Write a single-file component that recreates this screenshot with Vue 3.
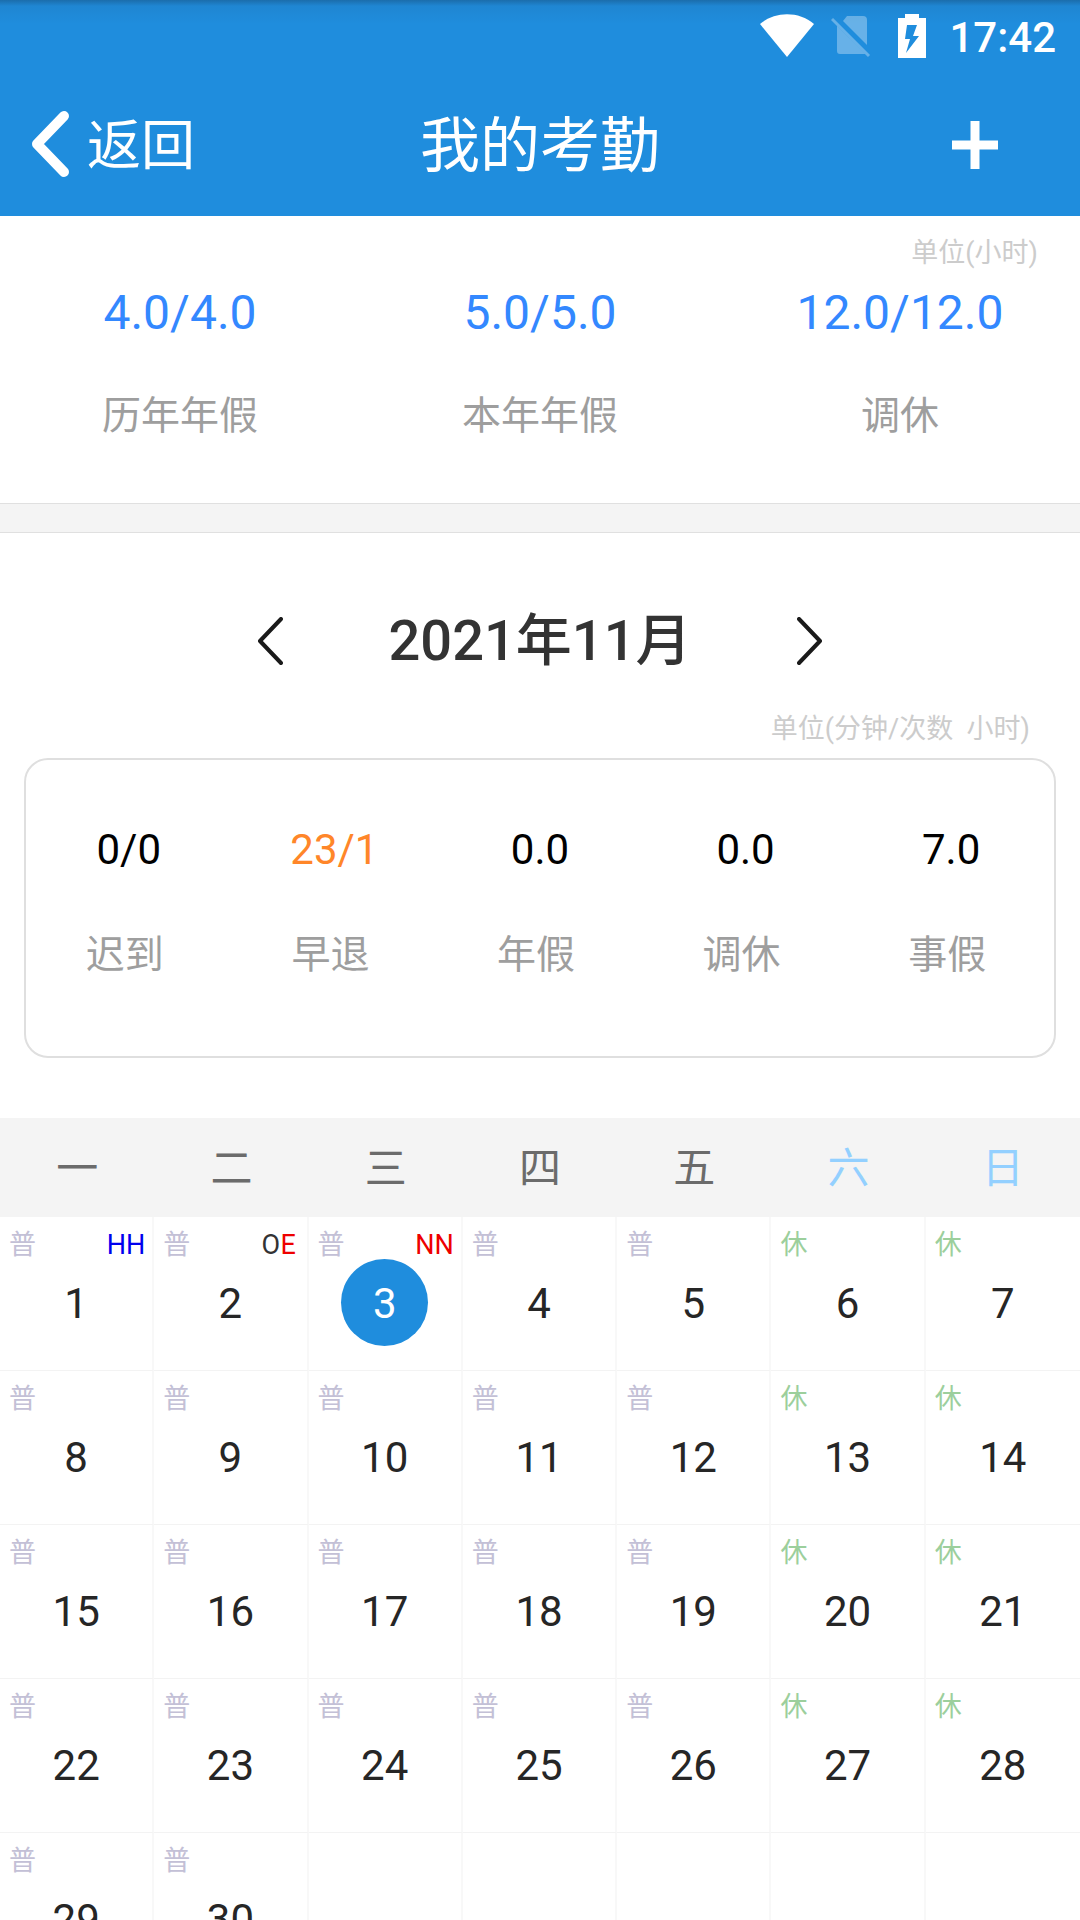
<template>
  <div class="page">
    <header class="header">
      <div class="status-bar">
        <svg class="icon-wifi" viewBox="0 0 54 44" aria-hidden="true">
          <path d="M0 10C15-3 39-3 54 10L27 43Z" fill="#fff" />
        </svg>
        <svg class="icon-sim" viewBox="0 0 40 44" aria-hidden="true">
          <path
            d="M16 2H32Q36 2 36 6V31L12 7ZM6 12L34 40H9Q6 40 6 37Z"
            fill="#fff"
            fill-opacity="0.32"
          />
          <path d="M1 5L38 42" stroke="#fff" stroke-opacity="0.32" stroke-width="3" />
        </svg>
        <svg class="icon-battery" viewBox="0 0 28 44" aria-hidden="true">
          <path
            d="M7 0H21V4H28V44H0V4H7ZM9 11L7 25H12L8 39L21 22H15L19 11Z"
            fill="#fff"
            fill-rule="evenodd"
          />
        </svg>
        <span class="time">17:42</span>
      </div>
      <nav class="nav">
        <button type="button" class="back">
          <svg class="icon-back" viewBox="0 0 38 66" aria-hidden="true">
            <path
              d="M33 5L6 33L33 61"
              fill="none"
              stroke="#fff"
              stroke-width="10"
              stroke-linecap="round"
              stroke-linejoin="round"
            />
          </svg>
          <span class="back-text">返回</span>
        </button>
        <h1 class="title">我的考勤</h1>
        <button type="button" class="add" aria-label="添加">
          <svg class="icon-add" viewBox="0 0 46 48" aria-hidden="true">
            <path d="M23 0V48M0 24H46" stroke="#fff" stroke-width="9" />
          </svg>
        </button>
      </nav>
    </header>

    <section class="leave">
      <p class="unit">单位(小时)</p>
      <ul class="leave-list">
        <li v-for="item in leaves" :key="item.label" class="leave-item">
          <span class="leave-value">{{ item.value }}</span>
          <span class="label">{{ item.label }}</span>
        </li>
      </ul>
    </section>

    <div class="divider"></div>

    <section class="month">
      <div class="month-switch">
        <button type="button" class="arrow" aria-label="上个月" @click="changeMonth(-1)">
          <svg class="icon-arrow" viewBox="0 0 26 48" aria-hidden="true">
            <path d="M24 2L3 24L24 46" />
          </svg>
        </button>
        <h2 class="month-title">{{ year }}年{{ month }}月</h2>
        <button type="button" class="arrow" aria-label="下个月" @click="changeMonth(1)">
          <svg class="icon-arrow" viewBox="0 0 26 48" aria-hidden="true">
            <path d="M2 2L23 24L2 46" />
          </svg>
        </button>
      </div>
      <p class="unit unit-month">{{ monthUnit }}</p>
      <ul class="stats">
        <li v-for="item in stats" :key="item.label" class="stats-item">
          <span class="stats-value" :class="{ warn: item.warn }">{{ item.value }}</span>
          <span class="label stats-label">{{ item.label }}</span>
        </li>
      </ul>
    </section>

    <table class="calendar">
      <thead>
        <tr>
          <th
            v-for="(name, index) in weekNames"
            :key="name"
            scope="col"
            class="week"
            :class="{ weekend: index > 4 }"
          >
            {{ name }}
          </th>
        </tr>
      </thead>
      <tbody>
        <tr v-for="(week, row) in weeks" :key="row">
          <td v-for="(day, col) in week" :key="col" class="cell">
            <template v-if="day">
              <span class="tag" :class="{ rest: col > 4 }">{{ col > 4 ? '休' : '普' }}</span>
              <span v-if="marks[day]" class="marks">
                <span
                  v-for="(mark, i) in marks[day]"
                  :key="i"
                  class="mark"
                  :class="mark.type"
                >{{ mark.text }}</span>
              </span>
              <button
                type="button"
                class="day"
                :class="{ selected: day === selected }"
                @click="selected = day"
              >
                {{ day }}
              </button>
            </template>
          </td>
        </tr>
      </tbody>
    </table>
  </div>
</template>

<script setup>
import { ref, computed } from 'vue'

const year = ref(2021)
const month = ref(11)
const selected = ref(3)

const weekNames = ['一', '二', '三', '四', '五', '六', '日']
const monthUnit = '单位(分钟/次数  小时)'

// 假期余额
const leaves = [
  { label: '历年年假', value: '4.0/4.0' },
  { label: '本年年假', value: '5.0/5.0' },
  { label: '调休', value: '12.0/12.0' }
]

// 当月统计
const stats = [
  { label: '迟到', value: '0/0' },
  { label: '早退', value: '23/1', warn: true },
  { label: '年假', value: '0.0' },
  { label: '调休', value: '0.0' },
  { label: '事假', value: '7.0' }
]

// 每日考勤标记（上午、下午）
const marks = {
  1: [{ text: 'H', type: 'holiday' }, { text: 'H', type: 'holiday' }],
  2: [{ text: 'O', type: 'normal' }, { text: 'E', type: 'abnormal' }],
  3: [{ text: 'N', type: 'abnormal' }, { text: 'N', type: 'abnormal' }]
}

// 按周一开头排列，空位补 null
const weeks = computed(() => {
  const offset = (new Date(year.value, month.value - 1, 1).getDay() + 6) % 7
  const total = new Date(year.value, month.value, 0).getDate()
  const cells = Array(offset).fill(null)
  for (let day = 1; day <= total; day++) {
    cells.push(day)
  }
  while (cells.length % 7) {
    cells.push(null)
  }
  const rows = []
  for (let i = 0; i < cells.length; i += 7) {
    rows.push(cells.slice(i, i + 7))
  }
  return rows
})

const changeMonth = (step) => {
  const date = new Date(year.value, month.value - 1 + step, 1)
  year.value = date.getFullYear()
  month.value = date.getMonth() + 1
}
</script>

<style>
body {
  margin: 0;
  background-color: #fff;
}
</style>

<style scoped>
.page {
  height: 100vh;
  overflow: hidden;
  background-color: #fff;
  color: #262626;
  font-family: Roboto, "Noto Sans CJK SC", sans-serif;
}
h1,
h2,
p,
ul {
  margin: 0;
  padding: 0;
}
ul {
  list-style: none;
}
button {
  padding: 0;
  border: 0;
  background: none;
  color: inherit;
  font-family: inherit;
  cursor: pointer;
}
svg {
  display: block;
}

/* 顶部 */
.header {
  background: linear-gradient(#1b6dab, #1f86d2 6px, #1f8ddd 24px);
  color: #fff;
}
.status-bar {
  display: flex;
  justify-content: flex-end;
  align-items: center;
  height: 72px;
  padding-right: 24px;
}
.icon-wifi {
  width: 54px;
  height: 44px;
  margin-right: 17px;
}
.icon-sim {
  width: 40px;
  height: 44px;
  margin-right: 27px;
}
.icon-battery {
  width: 28px;
  height: 44px;
  margin-right: 23px;
}
.time {
  padding-top: 4px;
  font-size: 42px;
  font-weight: 500;
  line-height: 68px;
}
.nav {
  display: grid;
  grid-template-columns: 1fr auto 1fr;
  align-items: center;
  height: 144px;
}
.back {
  display: flex;
  align-items: center;
  justify-self: start;
  gap: 18px;
  padding-left: 31px;
  font-size: 54px;
  line-height: 72px;
}
.back-text,
.title {
  padding-top: 6px;
}
.icon-back {
  width: 38px;
  height: 66px;
}
.title {
  font-size: 60px;
  font-weight: 400;
  line-height: 80px;
}
.add {
  justify-self: end;
  padding-top: 2px;
  padding-right: 82px;
}
.icon-add {
  width: 46px;
  height: 48px;
}

/* 假期余额 */
.leave {
  padding-top: 19px;
  padding-bottom: 63px;
}
.unit {
  padding-right: 42px;
  color: #ccc;
  font-size: 27px;
  line-height: 36px;
  text-align: right;
}
.leave-list {
  display: flex;
  margin-top: 14px;
}
.leave-item {
  display: flex;
  flex: 1;
  flex-direction: column;
  align-items: center;
  gap: 51px;
}
.leave-value {
  color: #3388ff;
  font-size: 48px;
  line-height: 56px;
}
.label {
  color: #9e9e9e;
  font-size: 39px;
  line-height: 48px;
}
.divider {
  height: 28px;
  border-top: 1px solid #e0e0e0;
  border-bottom: 1px solid #e0e0e0;
  background-color: #f4f4f4;
}

/* 月份与统计 */
.month {
  padding: 68px 24px 60px;
}
.month-switch {
  display: flex;
  justify-content: center;
  align-items: center;
  gap: 106px;
}
.month-title {
  color: #333;
  font-size: 56px;
  font-weight: 500;
  line-height: 80px;
}
.icon-arrow {
  width: 26px;
  height: 48px;
  fill: none;
  stroke: #1a1a1a;
  stroke-width: 4;
  stroke-linecap: round;
  stroke-linejoin: round;
}
.unit-month {
  margin-top: 30px;
  padding-right: 26px;
  white-space: pre;
}
.stats {
  display: flex;
  margin-top: 11px;
  padding-top: 62px;
  padding-bottom: 77px;
  border: 2px solid #dfdfdf;
  border-radius: 24px;
}
.stats-item {
  display: flex;
  flex: 1;
  flex-direction: column;
  align-items: center;
  gap: 53px;
}
.stats-value {
  color: #000;
  font-size: 42px;
  line-height: 56px;
}
.stats-value.warn {
  color: #ff8629;
}
.stats-label {
  padding-right: 8px;
}

/* 日历 */
.calendar {
  width: 100%;
  table-layout: fixed;
  border-spacing: 0;
}
.week {
  box-sizing: border-box;
  height: 99px;
  padding: 2px 0 0;
  background-color: #f4f4f4;
  color: #6b6b6b;
  font-size: 42px;
  font-weight: 400;
  line-height: 56px;
}
.week.weekend {
  color: #93d0ff;
}
.cell {
  position: relative;
  box-sizing: border-box;
  height: 154px;
  padding: 42px 0 0;
  border-right: 2px solid #f8f8f8;
  border-bottom: 1px solid #f3f3f3;
  text-align: center;
  vertical-align: top;
}
.cell:last-child {
  border-right: 0;
}
.tag,
.marks {
  position: absolute;
  top: 10px;
  font-size: 27px;
  line-height: 36px;
}
.tag {
  left: 9px;
  color: #c3c0d6;
}
.tag.rest {
  color: #9ccf9c;
}
.marks {
  right: 7px;
  display: flex;
}
.mark {
  min-width: 19px;
  text-align: left;
}
.holiday {
  color: #0000ee;
}
.normal {
  color: #333;
}
.abnormal {
  color: #ee0000;
}
.day {
  box-sizing: border-box;
  width: 87px;
  height: 87px;
  padding-top: 2px;
  border-radius: 50%;
  font-size: 42px;
  line-height: 85px;
}
.day.selected {
  background-color: #1f8ddd;
  color: #fff;
}
</style>
